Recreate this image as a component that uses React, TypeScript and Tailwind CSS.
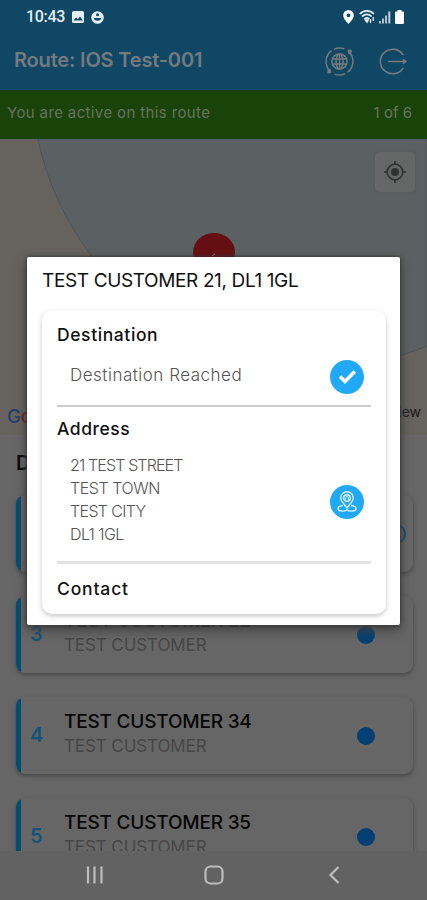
import React from 'react';

function StatusBar() {
  return (
    <div className="flex h-[34px] items-center justify-between pl-[26px] pr-[23px] text-[#e4eef6]">
      <div className="flex items-center gap-[7px]">
        <span className="font-[Roboto] text-[16px] font-medium leading-none tracking-[-0.3px]">10:43</span>
        <svg width="12" height="12" viewBox="0 0 12 12"><rect width="12" height="12" rx="1.5" fill="currentColor" /><path d="M1.500 9.500 4 6.500l2 1.500 2-2.500 3 4z" fill="#0f4765" /></svg>
        <svg width="13" height="13" viewBox="0 0 13 13"><circle cx="6.500" cy="6.500" r="6.300" fill="currentColor" /><circle cx="6.500" cy="3.700" r="1.500" fill="#0f4765" /><path d="M3 7h7a3.500 2.700 0 0 1-7 0z" fill="#0f4765" /></svg>
      </div>
      <div className="flex items-center gap-[4px]">
        <svg width="11" height="14" viewBox="0 0 11 14"><path fillRule="evenodd" d="M5.500 0A5.300 5.300 0 0 0 .2 5.300C.2 9 5.500 14 5.500 14s5.300-5 5.300-8.700A5.300 5.300 0 0 0 5.500 0zm0 3.400a1.900 1.900 0 1 1 0 3.800 1.900 1.900 0 0 1 0-3.800z" fill="white" /></svg>
        <svg className="ml-[1px]" width="16" height="14" viewBox="0 0 16 14" fill="none" stroke="currentColor" strokeWidth="1.700"><path d="M.8 3.800c4-4 10.200-4 14.200 0M3 6.500c3-2.700 6.800-2.700 9.700 0M5.500 9c1.500-1.400 3.300-1.400 4.800 0" /><path d="m6.500 10 1.500 2 1-2z" fill="currentColor" /><path d="M11.500 9v4M14.200 7v4" strokeWidth="1.300" /></svg>
        <svg width="12" height="14" viewBox="0 0 12 14" fill="#aebfca"><path d="M0 11h2v2.500H0zM3 8.500h2v5H3zM6 5.500h2v8H6z" /><path d="M9.300 1.500h2v12h-2z" fill="#c5d1da" /></svg>
        <svg width="9" height="14" viewBox="0 0 9 14"><path d="M2.500 0h4v1.500H8q1 0 1 1v10.200q0 1.300-1.300 1.300H1.300Q0 14 0 12.700V2.500q0-1 1-1h1.500z" fill="white" /></svg>
      </div>
    </div>
  );
}

function Header() {
  return (
    <header className="h-[90px] bg-[#0f4765]">
      <StatusBar />
      <div className="flex h-[54px] items-center justify-between pl-[14px] pr-[19px] text-[#747a7d]">
        <h1 className="pb-[2px] text-[20px] font-semibold leading-none tracking-[-0.18px]">Route: IOS Test-001</h1>
        <div className="flex items-center gap-[25px]">
          <svg width="29" height="29" viewBox="0 0 29 29" fill="none" stroke="currentColor" strokeWidth="1.500">
            <circle cx="14.500" cy="14.500" r="7.600" />
            <ellipse cx="14.500" cy="14.500" rx="3.500" ry="7.600" />
            <path d="M7.500 12h14M7.500 17h14M14.500 7v15M19.500 1.900A13.500 13.500 0 0 0 9 2.200M6.500 3.700A13.500 13.500 0 0 0 4.500 23.500M9.500 27.100A13.500 13.500 0 0 0 20 26.800M22.500 25.300A13.500 13.500 0 0 0 24.500 5.500" />
            <path d="m23 2.800 3.500.2-.3 3.500-3 .2zM2.700 22.300l3 .2.300 3.500-3.500.2z" fill="currentColor" strokeWidth=".4" />
          </svg>
          <svg width="29" height="29" viewBox="0 0 29 29" fill="none" stroke="currentColor" strokeWidth="1.600">
            <path d="M24.200 8.200A12.300 12.300 0 1 0 24.200 20.800M9 14.500h17" /><path d="m24 12 4 2.500-4 2.500z" fill="currentColor" strokeWidth=".6" />
          </svg>
        </div>
      </div>
    </header>
  );
}

function MapPanel() {
  return (
    <div className="relative h-[296px] overflow-hidden bg-[#66635e]">
      <svg className="absolute inset-0" width="427" height="296">
        <path d="M38 0C47 43 65 82 93 119 160 209 270 270 427 207V0z" fill="#5b6162" stroke="#4c555b" />
        <ellipse cx="214" cy="113" rx="21" ry="19" fill="#650f13" />
        <path d="m212 117 3-2" stroke="#92777a" fill="none" />
      </svg>
      <div className="absolute right-[12px] top-[13px] flex h-[40px] w-[40px] items-center justify-center rounded-[4px] bg-[#656666] shadow-[0_0_3px_#505556]">
        <svg width="22" height="22" viewBox="0 0 22 22" fill="none" stroke="#303232" strokeWidth="1.700"><circle cx="11" cy="11" r="7.800" /><circle cx="11" cy="11" r="4" fill="#303232" stroke="none" /><path d="M11 0v4M11 18v4M0 11h4M18 11h4" /></svg>
      </div>
      <div className="absolute left-[7px] top-[266px] text-[19px] font-medium leading-6 tracking-[-0.5px]"><span className="text-[#233f70]">G</span><span className="text-[#701b23]">o</span></div>
      <span className="absolute right-[6px] top-[263px] text-[14px] leading-5 text-[#17191a]">view</span>
    </div>
  );
}

function RouteCard({ number, name, ring = false }: { number: number; name: string; ring?: boolean }) {
  return (
    <div className="flex h-[77px] shrink-0 items-center overflow-hidden rounded-[9px] bg-[#666] shadow-[0_2px_4px_#484848]">
      <span className="h-full w-[5px] bg-[#054c72]" />
      <span className="w-[43px] pb-[2px] pl-[9px] text-[20px] font-semibold leading-none text-[#105579]">{number}</span>
      <div className="flex-1 pb-[3px]">
        <div className="whitespace-nowrap text-[19px] font-medium leading-[25px] tracking-[-0.2px] text-[#050505]">{name}</div>
        <div className="whitespace-nowrap text-[17px] leading-[25px] tracking-[-0.1px] text-[#464646]">TEST CUSTOMER</div>
      </div>
      {ring ? (
        <span className="mr-[7px] h-[20px] w-[20px] rounded-full border-2 border-[#104c6c]" />
      ) : (
        <span className="mr-[38px] h-[18px] w-[18px] rounded-full bg-[#043f73]" />
      )}
    </div>
  );
}

function AndroidNavigation() {
  return (
    <nav className="flex h-[49px] shrink-0 items-center bg-[#626262] pb-[2px] pl-[84px]">
      <svg width="260" height="22" viewBox="0 0 260 22" fill="none" stroke="#bdbdbd" strokeWidth="2.200">
        <path d="M4 2.500v17M10.500 2.500v17M17.500 2.500v17" /><rect x="121.500" y="2.500" width="17" height="17" rx="5" /><path d="m254.500 3-8 8 8 8" />
      </svg>
    </nav>
  );
}

function CustomerDialog() {
  return (
    <section className="absolute left-[27px] top-[257px] h-[368px] w-[373px] rounded-[2px] bg-white pl-[15px] pr-[14px] pt-[11px] text-[#111] shadow-[0_0_4px_#303030,0_5px_12px_#404040]">
      <h2 className="whitespace-nowrap text-[19px] leading-[25px] tracking-[-0.37px]">TEST CUSTOMER 21, DL1 1GL</h2>
      <div className="mt-[17px] h-[304px] rounded-[10px] bg-white pl-[15px] pr-[15px] pt-[12px] shadow-[0_2px_5px_#c5c5c5]">
        <h3 className="text-[17.500px] font-medium leading-[25px] tracking-[0.6px]">Destination</h3>
        <div className="mt-[11px] flex h-[38px] items-center justify-between pl-[13px] pr-[7px]">
          <span className="pb-[4px] text-[17px] font-light leading-[23px] tracking-[0.5px] text-[#555]">Destination Reached</span>
          <span className="flex h-[34px] w-[34px] items-center justify-center rounded-full bg-[#22a9f6]"><svg width="19" height="16" viewBox="0 0 19 16" fill="none" stroke="white" strokeWidth="3.600"><path d="m2 7.500 5 5L16.800 2.500" /></svg></span>
        </div>
        <div className="mt-[9px] h-[2px] bg-[#ccc]" />
        <h3 className="mt-[9px] text-[17.500px] font-medium leading-[25px] tracking-[0.55px]">Address</h3>
        <div className="mt-[12px] flex h-[94px] items-center justify-between pl-[13px] pr-[7px]">
          <address className="text-[16px] font-light not-italic leading-[23px] text-[#555]">
            <div className="tracking-[-0.87px]">21 TEST STREET</div>
            <div className="tracking-[-0.45px]">TEST TOWN</div>
            <div className="tracking-[-0.65px]">TEST CITY</div>
            <div className="tracking-[-0.6px]">DL1 1GL</div>
          </address>
          <span className="mt-[3px] flex h-[34px] w-[34px] items-center justify-center rounded-full bg-[#22a9f6]">
            <svg width="20" height="22" viewBox="0 0 20 22" fill="none" stroke="#d9f2ff" strokeWidth="1.400">
              <path d="M10 17C8.500 14 3.800 11 3.800 7a6.200 6.200 0 0 1 12.400 0c0 4-4.700 7-6.200 10z" />
              <circle cx="10" cy="7" r="3.300" /><path d="M8.500 9V6.500L10 5.300l1.500 1.200V9" strokeWidth="1" />
              <path d="M6 14.500c-3.500.3-5 1.500-5 3 0 3 6.500 3.500 9 1.200 2.500 2.300 9 1.800 9-1.200 0-1.500-1.500-2.700-5-3" />
            </svg>
          </span>
        </div>
        <div className="mt-[14px] h-[3px] bg-[#e2e2e2]" />
        <h3 className="mt-[12px] text-[17.500px] font-medium leading-[25px] tracking-[0.85px]">Contact</h3>
      </div>
    </section>
  );
}

export default function App() {
  return (
    <main className="relative flex h-[900px] w-[427px] flex-col overflow-hidden bg-[#666] font-[Inter,sans-serif]">
      <Header />
      <div className="flex h-[49px] shrink-0 items-center justify-between bg-[#1a4309] pl-[7px] pr-[15px] pb-[2px] text-[15px] text-[#66745f]"><span className="tracking-[0.37px]">You are active on this route</span><span>1 of 6</span></div>
      <MapPanel />
      <div className="flex h-[416px] shrink-0 flex-col overflow-hidden pl-[16px] pr-[14px]">
        <h2 className="flex h-[60px] shrink-0 items-center pb-[4px] text-[20px] font-semibold leading-none text-[#090909]">Deliveries</h2>
        <div className="flex flex-col gap-[24px]">
          <RouteCard number={2} name="TEST CUSTOMER 21" ring />
          <RouteCard number={3} name="TEST CUSTOMER 22" />
          <RouteCard number={4} name="TEST CUSTOMER 34" />
          <RouteCard number={5} name="TEST CUSTOMER 35" />
        </div>
      </div>
      <AndroidNavigation />
      <CustomerDialog />
    </main>
  );
}
